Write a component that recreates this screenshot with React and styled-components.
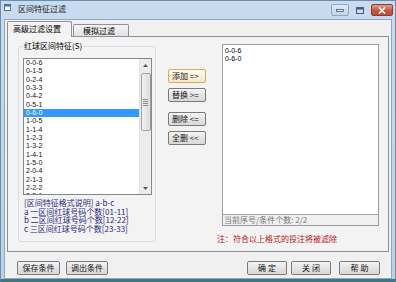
import React from 'react';
import styled, { createGlobalStyle } from 'styled-components';

const Global = createGlobalStyle`
  html, body { margin: 0; padding: 0; background: #c6d8ed; }
  body { font-family: "Noto Sans CJK SC", "Noto Sans", sans-serif; font-size: 8px; color: #000; }
  #root { width: 396px; height: 282px; }
  * { box-sizing: border-box; }
`;

const Window = styled.div`
  width: 396px;
  height: 282px;
  display: flex;
  flex-direction: column;
  background: linear-gradient(#c9dbef, #bcd0e7);
  border: 1px solid #6e8cab;
  border-bottom: 3px solid #3b7683;
`;

const TitleBar = styled.div`
  height: 17px;
  display: flex;
  align-items: flex-start;
  padding: 0 2px 0 2px;
`;

const TitleIcon = styled.svg`
  margin: 3px 0 0 1px;
  flex: none;
`;

const TitleText = styled.span`
  margin: 3px 0 0 7px;
  line-height: 10px;
  font-size: 8px;
  color: #1a1a1a;
  flex: 1;
`;

const CapButton = styled.div`
  height: 12px;
  width: ${p => p.$w}px;
  margin-top: 3px;
  margin-left: ${p => p.$ml || 0}px;
  display: flex;
  align-items: center;
  justify-content: center;
  border-radius: 2px;
  border: 1px solid ${p => p.$close ? '#8e3b2d' : p.$plain ? 'transparent' : '#8ea7c3'};
  background: ${p => p.$close
    ? 'linear-gradient(#e2a090, #c9553e 55%, #c24a35)'
    : p.$plain ? 'transparent' : 'linear-gradient(#dfeaf6, #c3d4e8)'};
`;

const Client = styled.div`
  flex: 1;
  margin: 1px 3px 0 3px;
  background: #f0f0f0;
  border: 1px solid #8fa7c1;
  display: flex;
  flex-direction: column;
`;

const TabStrip = styled.div`
  display: flex;
  align-items: flex-end;
  height: 15px;
  margin: 1px 0 0 2px;
  position: relative;
  z-index: 1;
`;

const Tab = styled.div`
  height: ${p => p.$active ? 16 : 12}px;
  width: ${p => p.$w}px;
  margin-bottom: ${p => p.$active ? -1 : 0}px;
  margin-left: ${p => p.$active ? 0 : 1}px;
  border: 1px solid #8e9199;
  border-bottom: none;
  border-radius: 2px 2px 0 0;
  background: ${p => p.$active ? '#f3f3f3' : 'linear-gradient(#f4f4f4, #e2e2e2)'};
  display: flex;
  align-items: center;
  padding-left: ${p => p.$pl}px;
  line-height: 10px;
  padding-bottom: ${p => p.$active ? 1 : 0}px;
`;

const Panel = styled.div`
  margin: 0 2px;
  height: 216px;
  border: 1px solid #8e9199;
  background: #f3f3f3;
  display: flex;
  align-items: flex-start;
  padding: 7px 10px 0 10px;
`;

const GroupBox = styled.div`
  position: relative;
  width: 138px;
  height: 196px;
  margin-top: 2px;
  border: 1px solid #d3dce3;
  border-radius: 3px;
  padding: 11px 0 0 4px;
  flex: none;
`;

const Legend = styled.span`
  position: absolute;
  top: -6px;
  left: 4px;
  padding: 0 1px;
  background: #f3f3f3;
  line-height: 10px;
`;

const ListBox = styled.div`
  width: 129px;
  height: 137px;
  border: 1px solid #828790;
  background: #fff;
  display: flex;
`;

const Rows = styled.div`
  flex: 1;
  overflow: hidden;
`;

const Row = styled.div`
  height: 8.33px;
  line-height: 8.33px;
  padding-left: 2px;
  font-family: "Liberation Sans", Arial, sans-serif;
  font-size: 7px;
  white-space: nowrap;
  background: ${p => p.$sel ? '#3399ff' : 'transparent'};
  color: ${p => p.$sel ? '#fff' : '#111'};
`;

const ScrollBar = styled.div`
  width: 12px;
  flex: none;
  background: #ececec;
  border-left: 1px solid #e2e2e2;
  display: flex;
  flex-direction: column;
  align-items: center;
`;

const Arrow = styled.div`
  height: 12px;
  width: 100%;
  display: flex;
  align-items: center;
  justify-content: center;
  margin-top: ${p => p.$bottom ? 'auto' : '0'};
`;

const Thumb = styled.div`
  width: 10px;
  height: 58px;
  margin-top: 2px;
  border: 1px solid #a0a0a0;
  border-radius: 2px;
  background: linear-gradient(90deg, #f2f2f2, #dcdcdc);
  display: flex;
  flex-direction: column;
  align-items: center;
  justify-content: center;
  gap: 1px;
`;

const Grip = styled.div`
  width: 5px;
  height: 1px;
  background: #8a8a8a;
`;

const Desc = styled.div`
  margin-top: 4px;
  padding-left: 1px;
  color: #27277f;
  font-size: 8px;
  line-height: 8.7px;
  white-space: pre;
`;

const MidColumn = styled.div`
  width: 66px;
  flex: none;
  display: flex;
  flex-direction: column;
  padding: 25px 0 0 12px;
  gap: 5px;
`;

const Btn = styled.div`
  width: ${p => p.$w || 38}px;
  height: 14px;
  flex: none;
  margin-top: ${p => p.$mt || 0}px;
  margin-left: ${p => p.$ml || 0}px;
  border: 1px solid ${p => p.$focus ? '#d9ad5c' : '#7a7a7a'};
  border-radius: 2px;
  background: ${p => p.$focus ? 'linear-gradient(#fefaf0, #f3e7c8)' : 'linear-gradient(#f5f5f5, #e4e4e4 50%, #d9d9d9)'};
  display: flex;
  align-items: center;
  justify-content: ${p => p.$center ? 'center' : 'flex-start'};
  padding-left: ${p => p.$center ? 0 : 3}px;
  font-size: 8px;
  line-height: 10px;
  white-space: pre;
  color: #111;
`;

const RightColumn = styled.div`
  width: 157px;
  flex: none;
  display: flex;
  flex-direction: column;
`;

const ResultBox = styled.div`
  height: 182px;
  border: 1px solid #9a9ea6;
  display: flex;
  flex-direction: column;
`;

const ResultList = styled.div`
  flex: 1;
  background: #fff;
  padding: 2px 0 0 2px;
  border-bottom: 1px solid #a8a8a8;
`;

const ResultRow = styled.div`
  line-height: 8.33px;
  height: 8.33px;
  font-family: "Liberation Sans", Arial, sans-serif;
  font-size: 7px;
`;

const Status = styled.div`
  height: 10px;
  line-height: 10px;
  padding-left: 1px;
  color: #777;
  font-size: 8px;
  background: #f0f0f0;
`;

const Note = styled.div`
  margin: 8px 0 0 -5px;
  line-height: 10px;
  color: #b8141a;
  font-size: 8px;
  white-space: nowrap;
`;

const BottomBar = styled.div`
  display: flex;
  align-items: center;
  margin-top: 9px;
  padding: 0 11px 0 12px;
  gap: 6px;
`;

const Spacer = styled.div`
  flex: 1;
`;

const items = ['0-0-6','0-1-5','0-2-4','0-3-3','0-4-2','0-5-1','0-6-0','1-0-5','1-1-4','1-2-3','1-3-2','1-4-1','1-5-0','2-0-4','2-1-3','2-2-2','2-3-1'];

export default function App() {
  return (
    <>
      <Global />
      <Window>
        <TitleBar>
          <TitleIcon width="7" height="7" viewBox="0 0 7 7">
            <rect x="0.5" y="0.5" width="6" height="6" fill="#fff" stroke="#5a6f86" />
            <rect x="1" y="1" width="5" height="1.5" fill="#3f6ea8" />
          </TitleIcon>
          <TitleText>区间特征过滤</TitleText>
          <CapButton $w={18}>
            <svg width="8" height="3" viewBox="0 0 8 3"><rect x="0.5" y="0.5" width="7" height="2" fill="#fff" stroke="#45607e" strokeWidth="0.8" /></svg>
          </CapButton>
          <CapButton $w={16} $ml={3} $plain>
            <svg width="8" height="7" viewBox="0 0 8 7"><rect x="0.5" y="0.5" width="7" height="6" fill="none" stroke="#45607e" strokeWidth="1" /><rect x="1" y="1" width="6" height="1.5" fill="#45607e" /></svg>
          </CapButton>
          <CapButton $w={22} $ml={3} $close>
            <svg width="8" height="7" viewBox="0 0 8 7"><path d="M1 0.5 L7 6.5 M7 0.5 L1 6.5" stroke="#fff" strokeWidth="1.6" /></svg>
          </CapButton>
        </TitleBar>
        <Client>
          <TabStrip>
            <Tab $active $w={65} $pl={5}>高级过滤设置</Tab>
            <Tab $w={56} $pl={9}>模拟过滤</Tab>
          </TabStrip>
          <Panel>
            <GroupBox>
              <Legend>红球区间特征(S)</Legend>
              <ListBox>
                <Rows>
                  {items.map((t, i) => (
                    <Row key={t} $sel={i === 6}>{t}</Row>
                  ))}
                </Rows>
                <ScrollBar>
                  <Arrow>
                    <svg width="5" height="3" viewBox="0 0 5 3"><path d="M0 3 L2.5 0 L5 3 Z" fill="#555" /></svg>
                  </Arrow>
                  <Thumb>
                    <Grip /><Grip /><Grip /><Grip />
                  </Thumb>
                  <Arrow $bottom>
                    <svg width="5" height="3" viewBox="0 0 5 3"><path d="M0 0 L2.5 3 L5 0 Z" fill="#555" /></svg>
                  </Arrow>
                </ScrollBar>
              </ListBox>
              <Desc>
                {'[区间特征格式说明] a-b-c\n'}
                {'a 一区间红球号码个数[01-11]\n'}
                {'b 二区间红球号码个数[12-22]\n'}
                {'c 三区间红球号码个数[23-33]'}
              </Desc>
            </GroupBox>
            <MidColumn>
              <Btn $focus>{'添加 =>'}</Btn>
              <Btn>{'替换 >='}</Btn>
              <Btn $mt={5}>{'删除 <='}</Btn>
              <Btn>{'全删 <<'}</Btn>
            </MidColumn>
            <RightColumn>
              <ResultBox>
                <ResultList>
                  <ResultRow>0-0-6</ResultRow>
                  <ResultRow>0-6-0</ResultRow>
                </ResultList>
                <Status>当前序号/条件个数: 2/2</Status>
              </ResultBox>
              <Note>注：符合以上格式的投注将被滤除</Note>
            </RightColumn>
          </Panel>
          <BottomBar>
            <Btn $w={43} $center>保存条件</Btn>
            <Btn $w={42} $center>调出条件</Btn>
            <Spacer />
            <Btn $w={40} $center>{'确 定'}</Btn>
            <Btn $w={40} $center $ml={-2}>{'关 闭'}</Btn>
            <Btn $w={41} $center $ml={2}>{'帮 助'}</Btn>
          </BottomBar>
        </Client>
      </Window>
    </>
  );
}
